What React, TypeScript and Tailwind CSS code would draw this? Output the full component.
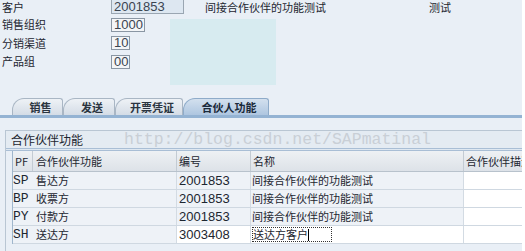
const cjk = "font-['Noto_Sans_CJK_SC','Noto_Sans',sans-serif]";
const num = "font-['Liberation_Sans',Arial,sans-serif]";

const headFields = [
  { label: "销售组织", value: "1000", w: "w-[34px]", h: "h-[19px]" },
  { label: "分销渠道", value: "10", w: "w-[19px]", h: "h-[18px]" },
  { label: "产品组", value: "00", w: "w-[19px]", h: "h-[19px]" },
];

const tabs = [
  { name: "销售", w: "w-[51px]" },
  { name: "发送", w: "w-[52px]" },
  { name: "开票凭证", w: "w-[68px]" },
  { name: "合伙人功能", w: "w-[86px]", active: true },
];

const partners = [
  { pf: "SP", fn: "售达方", no: "2001853", name: "间接合作伙伴的功能测试" },
  { pf: "BP", fn: "收票方", no: "2001853", name: "间接合作伙伴的功能测试" },
  { pf: "PY", fn: "付款方", no: "2001853", name: "间接合作伙伴的功能测试" },
  { pf: "SH", fn: "送达方", no: "3003408", name: "送达方客户", edit: true },
];

const App = () => {
  return (
    <div className={`w-[525px] h-[251px] overflow-hidden bg-white ${cjk} text-[11px] text-[#1d2630]`}>
      <div className="w-[522px] h-[251px] bg-[#e9eff6] flex flex-col">
        {/* header fields */}
        <div className="flex items-center h-[14px] leading-[14px]">
          <span className="w-[111px] pl-[2px]">客户</span>
          <div className={`w-[73px] h-[14px] border border-t-0 border-[#9aa6b2] bg-[#dde7f1] ${num} text-[13px] leading-[13px] pl-[2px] text-[#3a4450]`}>
            2001853
          </div>
          <span className="ml-[21px] w-[224px]">间接合作伙伴的功能测试</span>
          <span>测试</span>
        </div>
        <div className="flex mt-[1px]">
          <div className="flex flex-col w-[170px]">
            {headFields.map((f) => (
              <div key={f.label} className={`flex items-center ${f.h}`}>
                <span className="w-[111px] pl-[2px]">{f.label}</span>
                <div
                  className={`${f.w} h-[14px] border border-[#8a96a3] bg-[#f3f5f7] ${num} text-[13px] leading-[12px] pl-[2px] text-[#3a4450]`}
                >
                  {f.value}
                </div>
              </div>
            ))}
          </div>
          <div className="w-[106px] h-[66px] mt-[4px] bg-[#d7ebf0]" />
        </div>

        {/* tabs */}
        <div className="flex items-end h-[20px] mt-[10px] pl-[12px]">
          {tabs.map((t) => (
            <div
              key={t.name}
              className={`${t.w} h-[17px] flex items-center justify-center pl-[6px] border border-b-0 rounded-tl-[12px] rounded-tr-[3px] font-bold text-[11px] ${
                t.active
                  ? "bg-gradient-to-b from-[#d3e0ee] to-[#aec6e0] border-[#8eabc9] text-[#1b2a3a]"
                  : "bg-gradient-to-b from-[#eef2f6] to-[#d4dce6] border-[#a9b6c4] text-[#2a3440]"
              }`}
            >
              {t.name}
            </div>
          ))}
        </div>
        <div className="h-[3px] bg-[#94b3d3]" />

        {/* group box */}
        <div className="mt-[12px] ml-[5px] flex-1 border-l border-t border-[#b9c6d3] flex flex-col relative">
          <div className="h-[17px] flex items-center pl-[5px] bg-[#e4ebf2] text-[12px] text-[#1d2630]">
            合作伙伴功能
          </div>
          <span className="absolute left-[118px] top-[-3px] font-['Liberation_Mono',monospace] text-[16.5px] text-[#c9cfd6] pointer-events-none">
            http://blog.csdn.net/SAPmatinal
          </span>
          <div className="h-[3px] border-t border-b border-[#a9bed5] bg-[#dfe8f1]" />
          <div className="ml-[6px] border-l border-[#9fb6cc] flex flex-col">
            <div className="flex h-[21px] bg-gradient-to-b from-[#eef1f4] to-[#dde2e8] border-b border-[#b8c2cc] text-[11px]">
              <div className="w-[20px] pl-[2px] flex items-center border-r border-[#c3cbd3]">PF</div>
              <div className="w-[144px] pl-[3px] flex items-center border-r border-[#c3cbd3]">合作伙伴功能</div>
              <div className="w-[74px] pl-[2px] flex items-center border-r border-[#c3cbd3]">编号</div>
              <div className="w-[213px] pl-[2px] flex items-center border-r border-[#c3cbd3]">名称</div>
              <div className="flex-1 pl-[2px] flex items-center whitespace-nowrap overflow-hidden">合作伙伴描述</div>
            </div>
            {partners.map((p) => (
              <div key={p.pf} className="flex h-[18px] border-b border-[#cfd8e1] bg-[#eef2f7]">
                <div className="w-[20px] flex items-center font-['Liberation_Mono',monospace] text-[13px] leading-none">
                  {p.pf}
                </div>
                <div className="w-[144px] pl-[3px] flex items-center border-r border-[#d3dbe3]">{p.fn}</div>
                <div
                  className={`w-[74px] pl-[2px] flex items-center border-r border-[#d3dbe3] ${num} text-[13px] ${
                    p.edit ? "bg-white" : ""
                  }`}
                >
                  {p.no}
                </div>
                <div className={`w-[213px] pl-[1px] flex items-center border-r border-[#d3dbe3] ${p.edit ? "bg-white" : ""}`}>
                  {p.edit ? (
                    <span className="flex items-center h-[15px] border border-dotted border-[#333] w-[80px] whitespace-nowrap">
                      <span className="leading-none">{p.name}</span>
                      <span className="w-[1px] h-[12px] bg-black" />
                    </span>
                  ) : (
                    p.name
                  )}
                </div>
                <div className="flex-1 bg-white" />
              </div>
            ))}
          </div>
        </div>
      </div>
    </div>
  );
};

export default App;
